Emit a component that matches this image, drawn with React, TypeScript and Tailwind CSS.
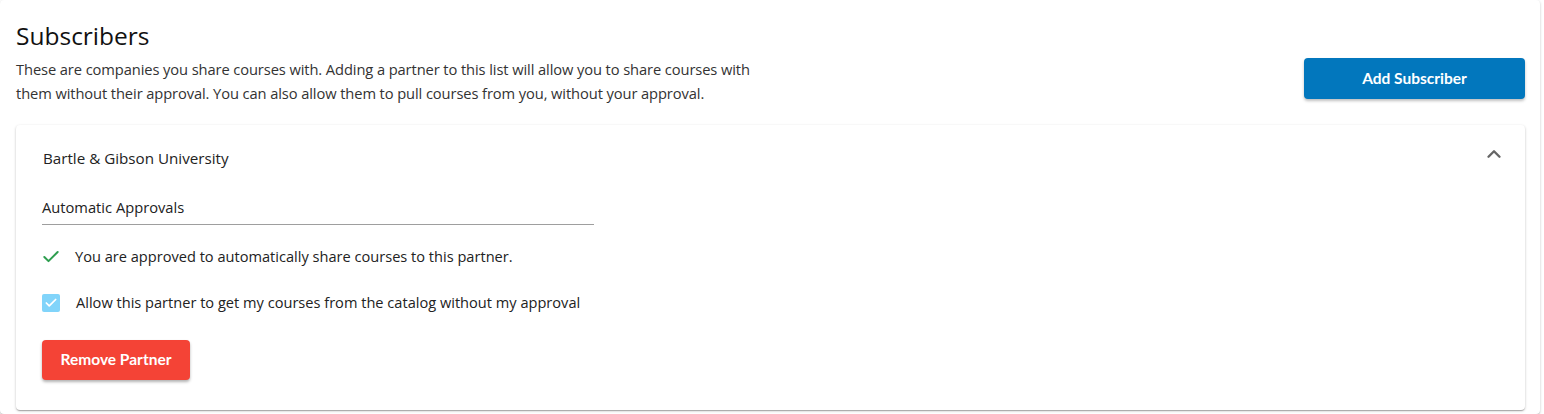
import { ChevronUp, Check } from 'lucide-react';

const bodyFont = { fontFamily: '"Open Sans", "Noto Sans", sans-serif' };

const App = () => {
  return (
    <div className="min-h-screen bg-white" style={bodyFont}>
      <div className="w-[1540px] rounded-[4px] bg-white shadow-[0_1px_3px_rgba(0,0,0,0.2),0_1px_1px_rgba(0,0,0,0.12)] px-4 pt-[18px] pb-1">
        <div className="flex items-start justify-between">
          <div>
            <h1 className="text-[24.5px] leading-[36px] text-[#111]">Subscribers</h1>
            <p className="mt-[3px] w-[750px] text-[14.7px] leading-[24px] tracking-[-0.1px] text-[#333]">
              These are companies you share courses with. Adding a partner to this list will allow you to share courses with them without their approval. You can also allow them to pull courses from you, without your approval.
            </p>
          </div>
          <button className="mt-[40px] mr-[-1px] h-[41px] w-[221px] rounded-[4px] bg-[#0277bd] text-[15.5px] font-bold text-white shadow-[0_2px_3px_rgba(0,0,0,0.25)]" style={{ fontFamily: 'Lato, sans-serif' }}>
            Add Subscriber
          </button>
        </div>

        <div className="mt-[20px] w-[1509px] rounded-[4px] bg-white shadow-[0_1px_3px_rgba(0,0,0,0.2),0_1px_1px_rgba(0,0,0,0.14),0_2px_1px_-1px_rgba(0,0,0,0.12)]">
          <div className="flex h-[66px] items-center justify-between pl-[27px] pr-[20px]">
            <span className="text-[15.2px] text-[#222]">Bartle &amp; Gibson University</span>
            <ChevronUp size={22} strokeWidth={2.6} className="text-[#666] mt-[-8px]" />
          </div>
          <div className="pl-[26px] pb-[30px]">
            <div className="w-[552px] border-b border-[#9e9e9e] pb-[6px] pt-[5px] text-[14.7px] text-[#222]">
              Automatic Approvals
            </div>
            <div className="mt-[21px] flex items-center gap-[14px]">
              <Check size={20} strokeWidth={2.4} className="text-[#2e9e4f] ml-[-1px]" />
              <span className="text-[14.6px] text-[#222]">You are approved to automatically share courses to this partner.</span>
            </div>
            <div className="mt-[24px] flex items-center gap-[16px]">
              <span className="flex h-[18px] w-[18px] items-center justify-center rounded-[2px] bg-[#81d4fa]">
                <Check size={14} strokeWidth={3} className="text-white" />
              </span>
              <span className="text-[14.6px] text-[#222]">Allow this partner to get my courses from the catalog without my approval</span>
            </div>
            <button className="mt-[26px] h-[40px] w-[148px] rounded-[4px] bg-[#f44336] text-[15.5px] font-bold text-white shadow-[0_2px_3px_rgba(0,0,0,0.3)]" style={{ fontFamily: 'Lato, sans-serif' }}>
              Remove Partner
            </button>
          </div>
        </div>
      </div>
    </div>
  );
};

export default App;
